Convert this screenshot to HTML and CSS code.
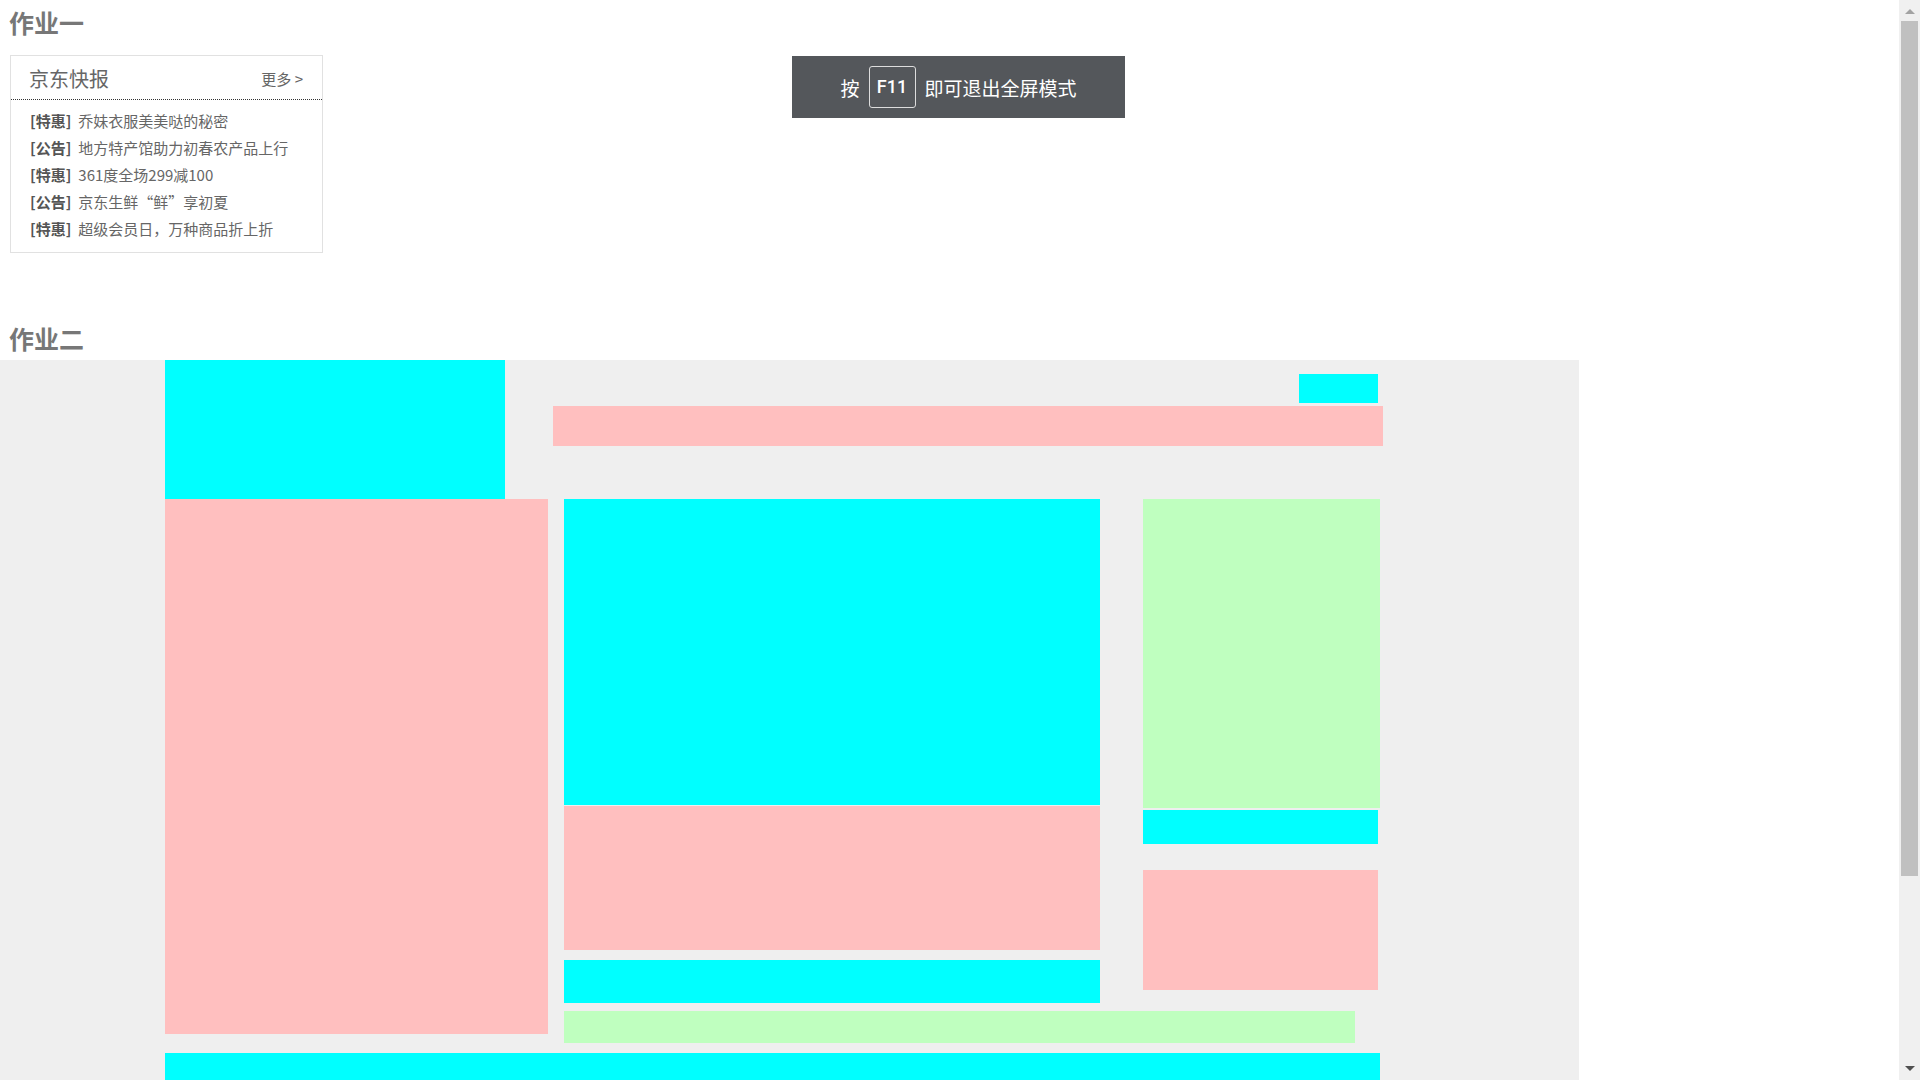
FILE: index.html
```html
<!DOCTYPE html>
<html lang="zh-CN">
<head>
    <meta charset="UTF-8">
    <meta name="viewport" content="width=device-width, initial-scale=1.0">
    <title>作业</title>
    <link rel="stylesheet" href="styles.css">
</head>
<body>
    <!-- 作业一：京东快报 -->
    <h2 class="title">作业一</h2>
    <div class="news">
        <div class="news-hd">
            <span class="news-title">京东快报</span>
            <a class="news-more" href="#">更多 &gt;</a>
        </div>
        <ul class="news-list">
            <li><b>[特惠]</b>乔妹衣服美美哒的秘密</li>
            <li><b>[公告]</b>地方特产馆助力初春农产品上行</li>
            <li><b>[特惠]</b>361度全场299减100</li>
            <li><b>[公告]</b>京东生鲜“鲜”享初夏</li>
            <li><b>[特惠]</b>超级会员日，万种商品折上折</li>
        </ul>
    </div>

    <!-- 作业二：页面布局 -->
    <h2 class="title title-second">作业二</h2>
    <div class="layout">
        <div class="header">
            <div class="logo"></div>
            <div class="header-right">
                <div class="shortcut"></div>
                <div class="search"></div>
            </div>
        </div>

        <div class="main">
            <div class="sidebar"></div>
            <div class="center">
                <div class="center-top">
                    <div class="col-mid">
                        <div class="banner"></div>
                        <div class="sub-banner"></div>
                        <div class="mid-bar"></div>
                    </div>
                    <div class="col-right">
                        <div class="user-box"></div>
                        <div class="notice-bar"></div>
                        <div class="service"></div>
                    </div>
                </div>
                <div class="long-bar"></div>
            </div>
        </div>

        <div class="footer-bar"></div>
    </div>

    <div class="fs-tip">
        <span>按</span>
        <span class="key">F11</span>
        <span>即可退出全屏模式</span>
    </div>

    <!-- 右侧滚动条 -->
    <div class="scrollbar">
        <span class="arrow arrow-up"></span>
        <div class="thumb"></div>
        <span class="arrow arrow-down"></span>
    </div>
</body>
</html>
```

FILE: styles.css
```css
* {
    margin: 0;
    padding: 0;
    box-sizing: border-box;
}

body {
    font-family: 'Microsoft YaHei', 'Noto Sans CJK SC', sans-serif;
    color: #666;
    background: #fff;
}

ul {
    list-style: none;
}

a {
    text-decoration: none;
    color: #666;
}

.title {
    font-size: 25px;
    line-height: 24px;
    font-weight: bold;
    color: #777;
    margin: 10px 0 0 9px;
}

.title-second {
    margin-top: 73px;
    margin-bottom: 10px;
}

/* 京东快报 */
.news {
    width: 313px;
    height: 198px;
    margin: 21px 0 0 10px;
    border: 1px solid #e1e1e1;
}

.news-hd {
    height: 44px;
    padding: 0 19px 0 18px;
    display: flex;
    align-items: center;
    justify-content: space-between;
    border-bottom: 1px dotted #333;
}

.news-title {
    font-size: 20px;
    color: #666;
    line-height: 24px;
    margin-top: 2px;
}

.news-more {
    font-size: 15px;
    line-height: 20px;
    margin-top: 2px;
}

.news-list {
    padding: 7px 0 0 19px;
}

.news-list li {
    font-size: 15px;
    line-height: 27px;
    height: 27px;
    color: #666;
    white-space: nowrap;
}

.news-list b {
    color: #555;
    margin-right: 7px;
}

/* 布局色块 */
.layout {
    width: 1579px;
    height: 951px;
    padding-left: 165px;
    background: #efefef;
}

.header {
    display: flex;
    height: 139px;
}

.logo {
    width: 340px;
    height: 139px;
    background: #0ff;
}

.header-right {
    width: 830px;
    margin-left: 48px;
    display: flex;
    flex-direction: column;
    align-items: flex-end;
}

.shortcut {
    width: 79px;
    height: 29px;
    margin: 14px 5px 0 0;
    background: #0ff;
}

.search {
    width: 830px;
    height: 40px;
    margin-top: 3px;
    background: #ffbfbf;
}

.main {
    display: flex;
    align-items: flex-start;
}

.sidebar {
    width: 383px;
    height: 535px;
    background: #ffbfbf;
}

.center {
    margin-left: 16px;
}

.center-top {
    display: flex;
    align-items: flex-start;
}

.col-mid {
    width: 536px;
}

.banner {
    height: 306px;
    background: #0ff;
}

.sub-banner {
    height: 144px;
    margin-top: 1px;
    background: #ffbfbf;
}

.mid-bar {
    height: 43px;
    margin-top: 10px;
    background: #0ff;
}

.col-right {
    width: 237px;
    margin-left: 43px;
}

.user-box {
    height: 309px;
    background: #bfffbf;
}

.notice-bar {
    width: 235px;
    height: 34px;
    margin-top: 2px;
    background: #0ff;
}

.service {
    width: 235px;
    height: 120px;
    margin-top: 26px;
    background: #ffbfbf;
}

.long-bar {
    width: 791px;
    height: 32px;
    margin-top: 8px;
    background: #bfffbf;
}

.footer-bar {
    width: 1215px;
    height: 80px;
    margin-top: 10px;
    background: #0ff;
}

/* 全屏提示 */
.fs-tip {
    position: fixed;
    left: 792px;
    top: 56px;
    width: 333px;
    height: 62px;
    background: #54575b;
    color: #fff;
    font-size: 19px;
    display: flex;
    align-items: center;
    justify-content: center;
    gap: 9px;
}

.key {
    font-family: Roboto, 'Noto Sans', sans-serif;
    font-weight: 500;
    font-size: 18px;
    width: 47px;
    height: 42px;
    line-height: 40px;
    text-align: center;
    border: 1px solid #ddd;
    border-radius: 3px;
}

/* 滚动条 */
.scrollbar {
    position: fixed;
    top: 0;
    right: 0;
    width: 21px;
    height: 100vh;
    background: #f0f0f0;
}

.thumb {
    position: absolute;
    left: 2px;
    top: 21px;
    width: 17px;
    height: 855px;
    background: #c0c0c0;
}

.arrow {
    position: absolute;
    left: 6px;
    width: 0;
    height: 0;
    border-left: 5px solid transparent;
    border-right: 5px solid transparent;
}

.arrow-up {
    top: 9px;
    border-bottom: 5px solid #a3a3a3;
}

.arrow-down {
    bottom: 9px;
    border-top: 5px solid #505050;
}
```
